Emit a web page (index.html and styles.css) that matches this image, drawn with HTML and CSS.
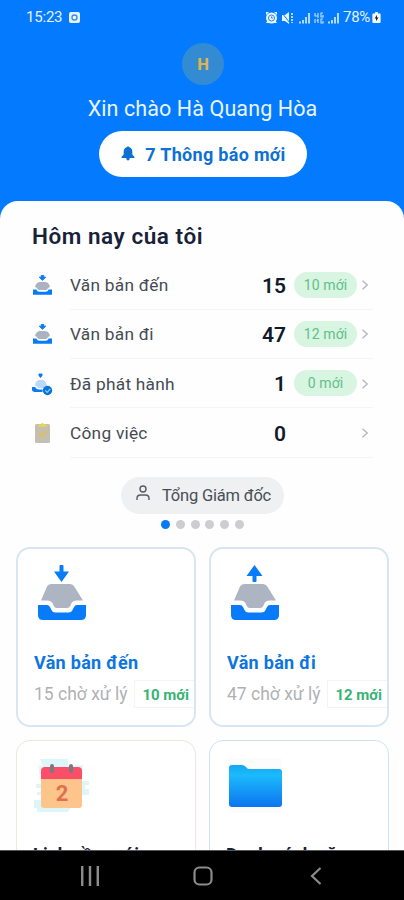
FILE: index.html
```html
<!DOCTYPE html>
<html lang="vi">
<head>
<meta charset="utf-8">
<title>Hôm nay của tôi</title>
<link rel="stylesheet" href="styles.css">
</head>
<body>
<svg class="defs" aria-hidden="true">
  <defs>
    <linearGradient id="folder" x1="0" y1="0" x2="0" y2="1"><stop offset="0" stop-color="#12a8f5"/><stop offset=".25" stop-color="#1cbafb"/><stop offset="1" stop-color="#0c74f0"/></linearGradient>
    <symbol id="tray" viewBox="0 0 48 36">
      <path d="M13 0h19q3 0 4.300 2.500L45 16.500h-7q-3 0-4.500 2.500l-1 2.500q-1 2.500-3.500 2.500H19q-2.500 0-3.500-2.500l-1-2.500q-1.500-2.500-4.500-2.500H3L9 2.500Q10.300 0 13 0z" fill="#adb5c2"/>
      <path d="M0 21h9q2 0 3 2l1.500 3q1 2.500 4 2.500h13q3 0 4-2.500l1.500-3q1-2 3-2h9v10q0 5-5 5H5q-5 0-5-5z" fill="#087cf8"/>
    </symbol>
    <symbol id="mini" viewBox="0 0 20 22">
      <path d="M8.800 1.500h2.400v1.700h2L10 6.300 6.800 3.200h2z" fill="#087cf8" stroke="#087cf8"/>
      <path d="M7 8h6q3.500.5 4.500 5-1.500 0-3.500 3H6q-2-3-3.500-3Q3.500 8.500 7 8z" fill="#adb2c0"/>
      <path d="M.5 15.500h3.300q1 2.300 3 2.300h6.400q2 0 3-2.300h3.300v5.200H.5z" fill="#087cf8"/>
    </symbol>
    <symbol id="chev" viewBox="0 0 8 10"><path d="M1.500.7 6.300 5 1.500 9.300" fill="none" stroke="#b2b5b8" stroke-width="1.300"/></symbol>
  </defs>
</svg>
<div class="phone">
  <header class="hero">
    <div class="status">
      <span class="clock">15:23</span>
      <svg class="rec" viewBox="0 0 11 11"><rect width="11" height="11" rx="2" fill="#e6f3ff"/><circle cx="5.500" cy="5.500" r="2.500" fill="#f3f9ff" stroke="#3390f4" stroke-width="1.400"/></svg>
      <svg class="signals" viewBox="0 0 74 14">
        <g fill="#e8f4ff"><circle cx="6.500" cy="7" r="5.500"/><path d="M1 4V1h3zM12 4V1H9zM1 12l2-3 2 3zM12 12l-2-3-2 3z"/><path d="M17 4h3l4-3v12l-4-3h-3z"/></g>
        <circle cx="6.500" cy="7" r="3" fill="none" stroke="#2489f4"/><path d="M6.500 5.500V7H8" fill="none" stroke="#2489f4"/>
        <path d="m17 2 8 10" stroke="#087cf8" stroke-width="1"/><path d="M27 2v10" stroke="#e8f4ff" stroke-width="1.500" stroke-dasharray="2 1"/>
        <path d="M35 12.500v-2M38 12.500V9M41 12.500V6M44 12.500V2M64 12.500v-2M67 12.500V9M70 12.500V6M73 12.500V2" stroke="#b2d9ff" stroke-width="2"/>
        <path d="M50 2v3h3M53 2v5M58 2h-2v4h2V4M50 8v4M53 12V8l-1 2M58 8h-2v4h2v-2" fill="none" stroke="#b7dbff" stroke-width="1.200"/>
      </svg>
      <span class="percent">78%</span>
      <svg class="battery" viewBox="0 0 9 12"><path d="M3 0h3v1.500h2q1 0 1 1V11q0 1-1 1H1q-1 0-1-1V2.500q0-1 1-1h2z" fill="#f4faff"/><path d="M5 3 2.500 7H4v3l2.700-4H5z" fill="#222"/></svg>
    </div>
    <div class="avatar">H</div>
    <div class="hello">Xin chào Hà Quang Hòa</div>
    <div class="notice">
      <svg viewBox="0 0 14 15"><path d="M6 1q1-1.500 2 0 3.300 1 3.300 4.500v3L13.500 11v1H.5v-1l2.200-2.500v-3Q2.700 2 6 1zM5.200 12h3.600Q8.500 14.500 7 14.500T5.200 12z" fill="#0d71d2"/></svg>
      <span>7 Thông báo mới</span>
    </div>
  </header>
  <main class="sheet">
    <h1>Hôm nay của tôi</h1>
    <ul class="rows">
      <li><svg class="ico"><use href="#mini"/></svg><div class="row"><span class="name">Văn bản đến</span><b>15</b><span class="pill">10 mới</span><svg class="chev"><use href="#chev"/></svg></div></li>
      <li><svg class="ico"><use href="#mini"/></svg><div class="row"><span class="name">Văn bản đi</span><b>47</b><span class="pill">12 mới</span><svg class="chev"><use href="#chev"/></svg></div></li>
      <li><svg class="ico" viewBox="0 0 20 22"><path d="M6.500 1h3v1.500L8 4.500l-1.500-2z" fill="#087cf8" stroke="#087cf8"/><path d="M6 7h4.500q3 1 4 5.500-2 0-3 2.500H5.500q-1-2.500-3-2.500Q3 8 6 7z" fill="#b9d9fa"/><path d="M-.5 14h3q1.500 2.500 4 2.500h3.500V19H2Q-.5 18.500-.5 17z" fill="#087cf8"/><circle cx="15" cy="17.500" r="4.700" fill="#0875df"/><path d="m12.700 17.300 2 2 3-3.500" fill="none" stroke="#8fcaff" stroke-width="1.200"/></svg><div class="row"><span class="name">Đã phát hành</span><b>1</b><span class="pill">0 mới</span><svg class="chev"><use href="#chev"/></svg></div></li>
      <li><svg class="ico" viewBox="0 0 20 22"><rect x="2.500" y="2" width="15" height="19" rx="1.500" fill="#c5bfb1"/><path d="M6 2.500h2q2-3 4 0h2V5H6z" fill="#dfd65a"/><path d="m6.500 11.500 2.500 2.500 5-5" fill="none" stroke="#e0c14f" stroke-width="1.800"/></svg><div class="row"><span class="name">Công việc</span><b>0</b><span class="pill none"></span><svg class="chev"><use href="#chev"/></svg></div></li>
    </ul>
    <div class="role">
      <svg viewBox="0 0 14 16"><circle cx="7" cy="4" r="3" /><path d="M1 15v-1.500Q1 10 4.500 10h5q3.500 0 3.500 3.500V15"/></svg>
      <span>Tổng Giám đốc</span>
    </div>
    <div class="dots"><i class="on"></i><i></i><i></i><i></i><i></i><i></i></div>
    <div class="cards">
      <section class="card">
        <svg class="art" viewBox="0 0 54 56"><path d="M24.500 0q0-1 1-1h2q1 0 1 1v5.500H34L26.500 16 19 5.500h5.500z" fill="#087cf8"/><use href="#tray" x="3" y="18" width="48" height="36"/></svg>
        <h2>Văn bản đến</h2>
        <div class="meta"><span>15 chờ xử lý</span><em>10 mới</em></div>
      </section>
      <section class="card">
        <svg class="art" viewBox="0 0 54 56"><path d="M24.500 15q0 1 1 1h2q1 0 1-1v-5H34.500L26.500-1l-8 11h6z" fill="#087cf8"/><use href="#tray" x="3" y="18" width="48" height="36"/></svg>
        <h2>Văn bản đi</h2>
        <div class="meta"><span>47 chờ xử lý</span><em>12 mới</em></div>
      </section>
      <section class="card warm">
        <svg class="art" viewBox="0 0 54 56"><path d="M5-1h28v6h15v9H4V6h4zM45 21h9v4h-4v4h4v6H2v-3h4v-4H1v-4zM-1 40h9v-5h34l-9 17H2v-4h-3z" fill="#ddf6f9"/><rect x="6" y="8" width="41" height="40" rx="3" fill="#fdc58c"/><path d="M6 19v-8q0-4 4-4h33q4 0 4 4v8z" fill="#fb4e68"/><path d="M17 6v5M36 6v5" stroke="#797982" stroke-width="4" stroke-linecap="round"/><text x="27" y="41" class="day" text-anchor="middle">2</text></svg>
        <h2>Lịch cần mới</h2>
      </section>
      <section class="card cool">
        <svg class="art" viewBox="0 0 54 56"><rect x="0" y="-2" width="54" height="55" fill="#fcfcfd"/><path d="M1 8q0-3 3-3h10q2 0 4 2l2 2h31q3 0 3 3v32q0 3-3 3H4q-3 0-3-3z" fill="url(#folder)"/></svg>
        <h2>Danh sách văn</h2>
      </section>
    </div>
  </main>
  <nav class="nav">
    <svg viewBox="0 0 18 18"><path d="M2 0v18M9 0v18M16 0v18"/></svg>
    <svg viewBox="0 0 20 20"><rect x="1.500" y="1.500" width="17" height="17" rx="5"/></svg>
    <svg viewBox="0 0 12 18"><path d="M10.500 1 2 9l8.500 8"/></svg>
  </nav>
</div>
</body>
</html>
```
FILE: styles.css
```css
* { box-sizing: border-box; }
body { margin: 0; font-family: Roboto, "Liberation Sans", sans-serif; background: #047bff; }
.defs { position: absolute; width: 0; height: 0; }
.phone { width: 404px; height: 900px; display: flex; flex-direction: column; overflow: hidden; background: #047bff; }
.hero { height: 201px; flex: none; display: flex; flex-direction: column; align-items: center; }
.status { width: 100%; height: 35px; padding: 0 23px 0 26px; display: flex; align-items: center; color: #e4f2ff; font-size: 15px; line-height: 35px; }
.clock { width: 43px; letter-spacing: -.2px; }
.rec { width: 11px; height: 11px; }
.signals { width: 74px; height: 14px; margin-left: auto; margin-right: 4px; }
.percent { width: 28px; letter-spacing: -.3px; }
.battery { width: 9px; height: 11px; margin-left: 1px; }
.avatar { width: 42px; height: 42px; margin: 8px 0 0 2px; border-radius: 50%; background: #338bd3; color: #dfb450; display: grid; place-items: center; font-size: 16.500px; font-weight: 800; padding-top: 1px; }
.hello { margin: 12px 0 0 1px; height: 24px; line-height: 24px; color: #e8f5ff; font-size: 21.500px; letter-spacing: .1px; white-space: nowrap; }
.notice { margin: 10px 0 0 1px; width: 208px; height: 46px; border-radius: 23px; background: #fff; color: #0d71d2; display: flex; align-items: center; justify-content: center; gap: 10px; padding: 1px 0 0 2px; font-size: 18px; letter-spacing: .3px; font-weight: 700; white-space: nowrap; }
.notice svg { width: 14px; height: 15px; margin-bottom: 2px; }
.sheet { flex: 1; min-height: 0; overflow: hidden; background: #fefefe; border-radius: 18px 18px 0 0; display: flex; flex-direction: column; align-items: center; }
h1 { margin: 20px 0 0 32px; align-self: flex-start; height: 30px; line-height: 30px; font-size: 22.500px; letter-spacing: .55px; font-weight: 600; color: #172239; white-space: nowrap; }
.rows { list-style: none; margin: 9.500px 0 0; padding: 0 31px 0 32px; width: 100%; }
.rows li { display: flex; align-items: center; height: 49.300px; }
.ico { width: 21px; height: 22px; margin-right: 17px; overflow: visible; }
.row { flex: 1; height: 100%; display: flex; align-items: center; border-bottom: 1px solid #f3f4f5; padding-top: 1px; color: #454b53; font-size: 17.300px; letter-spacing: .25px; white-space: nowrap; }
.name { flex: 1; }
.row b { color: #121a2a; font-size: 21px; font-weight: 600; letter-spacing: 0; padding-top: 1px; }
.pill { width: 63px; height: 26px; line-height: 27px; margin: 0 4px 1px 8px; border-radius: 13px; background: #d8f5e1; color: #61c08a; font-size: 14px; text-align: center; letter-spacing: .1px; }
.pill.none { background: none; }
.chev { width: 8px; height: 10px; margin-right: 4px; }
.role { flex: none; margin: 19px 0 0 1px; width: 163px; height: 37px; border-radius: 18.500px; background: #eef0f2; color: #484e56; display: flex; align-items: center; padding-left: 15px; gap: 12px; font-size: 16.500px; letter-spacing: -.2px; white-space: nowrap; }
.role svg { width: 14px; height: 16px; margin-bottom: 4px; fill: none; stroke: #575c63; stroke-width: 1.400; }
.dots { flex: none; display: flex; gap: 5.700px; margin-top: 6px; height: 9px; margin-left: 1px; }
.dots i { width: 9px; height: 9px; border-radius: 50%; background: #cdcdcf; }
.dots .on { background: #087af0; }
.cards { width: 100%; flex: none; margin-top: 18px; padding: 0 15px 0 16px; display: grid; grid-template-columns: 180px 180px; grid-auto-rows: 180px; gap: 13px; }
.card { border: 2px solid #d8e6f4; border-radius: 14px; padding: 17px 0 0 16px; overflow: hidden; background: #fff; }
.card.warm { border: 1.500px solid #eee6df; }
.card.cool { border: 1.500px solid #cfe2f3; }
.art { display: block; width: 54px; height: 56px; margin-left: 1px; overflow: visible; }
h2 { margin: 29px 0 0; height: 23px; line-height: 23px; font-size: 18px; letter-spacing: .3px; font-weight: 700; color: #0d75df; white-space: nowrap; }
.warm .art, .cool .art { margin-top: 2px; }
.warm .art, .cool .art { margin-left: 2px; }
.warm h2, .cool h2 { margin-top: 27px; color: #172239; }
.meta { display: flex; align-items: center; justify-content: space-between; margin-top: 6px; height: 28px; color: #b0b1b4; font-size: 17.500px; white-space: nowrap; }
.meta em { font-style: normal; font-weight: 700; font-size: 15px; color: #38b374; padding: 0 5px 0 7px; height: 28px; line-height: 28px; border: 1px solid #f3f5f4; border-right: 0; }
.day { font-family: Roboto, sans-serif; font-size: 22px; font-weight: 700; fill: #e0714f; }
.nav { flex: none; height: 50px; background: #000; border-top: 1px solid #555; display: grid; grid-template-columns: 20px 20px 12px; gap: 93px 93px; align-items: center; padding: 0 0 0 80px; }
.nav svg { width: 100%; height: 20px; fill: none; stroke: #8b8b8b; stroke-width: 2.200; }
.nav svg:last-child { margin-left: 4px; }
```
